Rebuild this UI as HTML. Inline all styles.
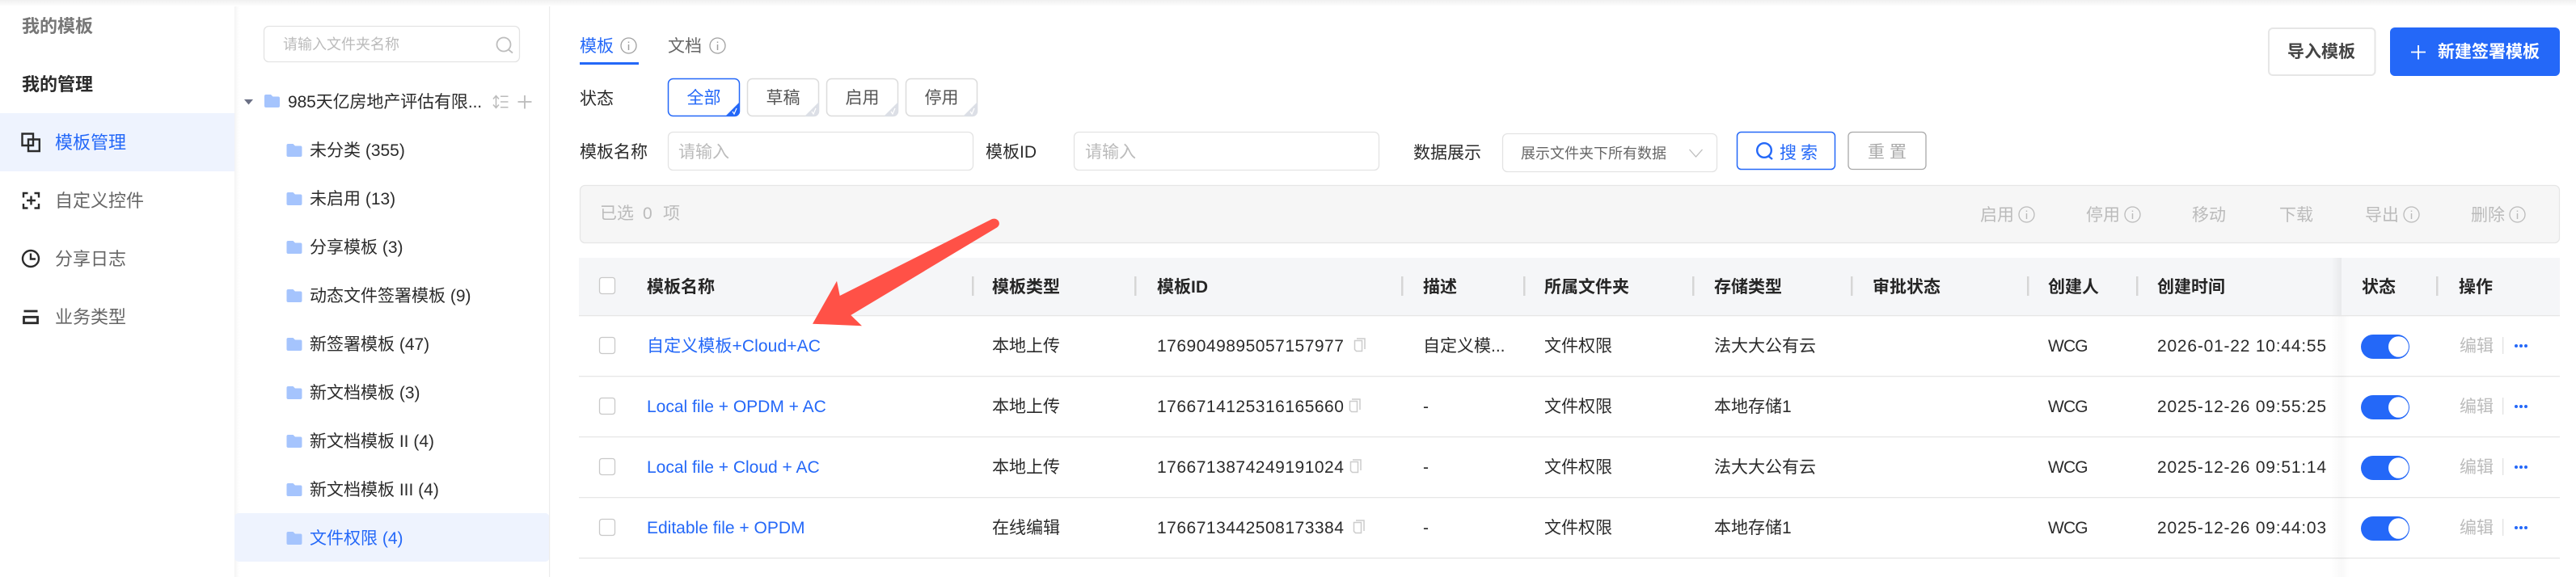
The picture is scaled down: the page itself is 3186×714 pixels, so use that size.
<!DOCTYPE html>
<html lang="zh-CN"><head><meta charset="utf-8"><title>模板管理</title>
<style>
html,body{margin:0;padding:0;background:#fff}
body{position:relative;width:3186px;height:714px;overflow:hidden;font-family:"Liberation Sans","Noto Sans CJK SC",sans-serif;font-size:21px;color:#2b2b2b}
svg{position:absolute;left:0;top:0}
.t{position:absolute;line-height:30px;white-space:nowrap;margin-top:2px}
.r{margin-top:1px}
.n{font-size:22px;color:#666;margin-top:1px}
.h{font-weight:700;color:#262626}
.l{color:#2468f8}
.g{color:#bbb}
.d{letter-spacing:.78px}
.i{letter-spacing:.5px}
.w{letter-spacing:-.85px}
.c{text-align:center}
</style></head><body>
<svg width="3186" height="714" viewBox="0 0 3186 714" fill="none">
<defs>
<linearGradient id="top" x1="0" y1="0" x2="0" y2="1"><stop offset="0" stop-color="#f0f0f0"/><stop offset="1" stop-color="#fff"/></linearGradient>
<linearGradient id="lft" x1="0" y1="0" x2="1" y2="0"><stop offset="0" stop-color="#f3f3f3"/><stop offset="1" stop-color="#fff" stop-opacity="0"/></linearGradient>
<linearGradient id="fix" x1="0" y1="0" x2="1" y2="0"><stop offset="0" stop-color="#000" stop-opacity="0"/><stop offset="1" stop-color="#000" stop-opacity=".05"/></linearGradient>
<linearGradient id="fixb" x1="0" y1="0" x2="1" y2="0"><stop offset="0" stop-color="#000" stop-opacity="0"/><stop offset="1" stop-color="#000" stop-opacity=".025"/></linearGradient>
<linearGradient id="fix2" x1="0" y1="0" x2="1" y2="0"><stop offset="0" stop-color="#000" stop-opacity=".025"/><stop offset="1" stop-color="#000" stop-opacity="0"/></linearGradient>
<symbol id="fd" viewBox="0 0 19 16"><path d="M2 0H8L10.5 2.5H17a2 2 0 0 1 2 2V14a2 2 0 0 1-2 2H2a2 2 0 0 1-2-2V2a2 2 0 0 1 2-2Z" fill="#a5c4fd"/></symbol>
<symbol id="inf" viewBox="0 0 21 21"><circle cx="10.500" cy="10.500" r="9.500" fill="none" stroke="currentColor" stroke-width="1.300"/><path d="M10.500 9v7M10.500 5.500v1.500" stroke="currentColor" stroke-width="1.500" fill="none"/></symbol>
<symbol id="cp" viewBox="0 0 15 18"><path d="M4 1H14V14" stroke="#ccc" stroke-width="1.500" fill="none"/><path d="M1.500 3.500H10.500V16.500H3.500L1.500 14.500Z" stroke="#ccc" stroke-width="1.500" fill="#fff"/></symbol>
<symbol id="tg" viewBox="0 0 60 30"><rect width="60" height="30" rx="15" fill="#2468f8"/><ellipse cx="46.500" cy="15" rx="12.500" ry="12.800" fill="#fff"/></symbol>
<symbol id="dt" viewBox="0 0 16 4"><circle cx="2" cy="2" r="2" fill="#2468f8"/><circle cx="8" cy="2" r="2" fill="#2468f8"/><circle cx="14" cy="2" r="2" fill="#2468f8"/></symbol>
</defs>
<!-- sidebar -->
<rect x="0" y="140" width="290" height="72" fill="#eef3fe"/>
<g stroke="#2b2b2b" stroke-width="2.400">
<path d="M27.500 165.500H41V180H27.500ZM35 172.500H48.800V187H35Z"/>
<path d="M34.500 239H29V244.500M42.500 239H48V244.500M29 252V257.500H34.500M48 252V257.500H42.500M38.500 242.500V253.500M33 248H44"/>
<circle cx="38" cy="320" r="10"/><path d="M38 313.500V320.500H44"/>
<path d="M29.500 385H46.500M29.500 392.300H46.500V399.700H29.500Z" stroke-width="2.800"/>
</g>
<!-- tree panel -->
<rect x="290" y="0" width="8" height="714" fill="url(#lft)"/>
<rect x="290" y="635" width="389.500" height="60" rx="5" fill="#eef3fe"/>
<rect x="679" y="0" width="1.200" height="714" fill="#ececec"/>
<rect x="326.500" y="32.500" width="316" height="44" rx="6" stroke="#e3e3e3" stroke-width="1.300" fill="#fff"/>
<circle cx="623" cy="55" r="8.500" stroke="#bdbdbd" stroke-width="1.800"/><path d="M629 61.500L634 65.500" stroke="#bdbdbd" stroke-width="1.800"/>
<path d="M302 123H313L307.500 129.500Z" fill="#6b7085"/>
<use href="#fd" x="327" y="117" width="19" height="16"/>
<g stroke="#bbb" stroke-width="1.500">
<path d="M613.500 119V133M610 122.500L613.500 118.500L617 122.500M610 129.500L613.500 133.500L617 129.500M619 119.300H628.500M619 126H628.500M619 132.700H628.500"/>
<path d="M649 118V134.500M640.500 126H657.500" stroke-width="1.800"/>
</g>
<use href="#fd" x="354.500" y="178" width="19" height="16"/>
<use href="#fd" x="354.500" y="238" width="19" height="16"/>
<use href="#fd" x="354.500" y="298" width="19" height="16"/>
<use href="#fd" x="354.500" y="358" width="19" height="16"/>
<use href="#fd" x="354.500" y="418" width="19" height="16"/>
<use href="#fd" x="354.500" y="478" width="19" height="16"/>
<use href="#fd" x="354.500" y="538" width="19" height="16"/>
<use href="#fd" x="354.500" y="598" width="19" height="16"/>
<use href="#fd" x="354.500" y="658" width="19" height="16"/>
<!-- tabs -->
<rect x="717" y="77" width="73" height="3" fill="#2468f8"/>
<use href="#inf" x="767" y="46" width="21" height="21" color="#a0a0a0"/>
<use href="#inf" x="877" y="46" width="21" height="21" color="#a0a0a0"/>
<!-- chips -->
<rect x="826.500" y="97.500" width="88" height="46" rx="6" stroke="#2468f8" stroke-width="1.500" fill="#fff"/>
<rect x="924.500" y="97.500" width="88" height="46" rx="6" stroke="#dcdcdc" stroke-width="1.500" fill="#fff"/>
<rect x="1022.500" y="97.500" width="88" height="46" rx="6" stroke="#dcdcdc" stroke-width="1.500" fill="#fff"/>
<rect x="1120.500" y="97.500" width="88" height="46" rx="6" stroke="#dcdcdc" stroke-width="1.500" fill="#fff"/>
<path d="M915 126V138a6 6 0 0 1-6 6H897Z" fill="#2468f8"/>
<path d="M1013 126V138a6 6 0 0 1-6 6H995Z" fill="#dcdfe6"/>
<path d="M1111 126V138a6 6 0 0 1-6 6H1093Z" fill="#dcdfe6"/>
<path d="M1209 126V138a6 6 0 0 1-6 6H1191Z" fill="#dcdfe6"/>
<g stroke="#fff" stroke-width="1.200"><path d="M906 138L908 141L911 134"/><path d="M1004 138L1006 141L1009 134"/><path d="M1102 138L1104 141L1107 134"/><path d="M1200 138L1202 141L1205 134"/></g>
<!-- filters -->
<rect x="826.500" y="163.500" width="377" height="47" rx="6" stroke="#e3e3e3" stroke-width="1.300" fill="#fff"/>
<rect x="1328.500" y="163.500" width="377" height="47" rx="6" stroke="#e3e3e3" stroke-width="1.300" fill="#fff"/>
<rect x="1858.500" y="165.500" width="265" height="47" rx="6" stroke="#e3e3e3" stroke-width="1.300" fill="#fff"/>
<path d="M2089.500 185L2097.500 194L2105.500 185" stroke="#bdbdbd" stroke-width="1.300"/>
<rect x="2148.500" y="163.500" width="121" height="46" rx="5" stroke="#2468f8" stroke-width="1.500" fill="#fff"/>
<circle cx="2182" cy="186" r="8.800" stroke="#2468f8" stroke-width="2.400"/><path d="M2187 193L2192 197" stroke="#2468f8" stroke-width="2.400"/>
<rect x="2286" y="163.500" width="96" height="46" rx="5" stroke="#a8a8a8" stroke-width="1.300" fill="#fff"/>
<rect x="2806" y="35" width="131.500" height="58" rx="5" stroke="#e6e6e6" stroke-width="2" fill="#fff"/>
<rect x="2956" y="34" width="210" height="60" rx="6" fill="#2468f8"/>
<path d="M2991 56V73.500M2982 64.500H3000" stroke="#fff" stroke-width="1.800"/>
<!-- selection bar -->
<rect x="717.500" y="229.500" width="2448" height="71" rx="6" fill="#f6f6f6" stroke="#e6e6e6" stroke-width="1.300"/>
<use href="#inf" x="2496" y="255" width="21" height="21" color="#bbb"/>
<use href="#inf" x="2627" y="255" width="21" height="21" color="#bbb"/>
<use href="#inf" x="2972" y="255" width="21" height="21" color="#bbb"/>
<use href="#inf" x="3103" y="255" width="21" height="21" color="#bbb"/>
<!-- table -->
<rect x="716" y="319" width="2450" height="71" fill="#f5f6f8"/>
<g fill="#e6e6e6">
<rect x="716" y="390" width="2450" height="1.300"/>
<rect x="716" y="465" width="2450" height="1.300"/>
<rect x="716" y="540" width="2450" height="1.300"/>
<rect x="716" y="615" width="2450" height="1.300"/>
<rect x="716" y="690" width="2450" height="1.300"/>
</g>
<g fill="#d6d6d6">
<rect x="1202" y="342" width="2.500" height="24"/><rect x="1403" y="342" width="2.500" height="24"/><rect x="1733" y="342" width="2.500" height="24"/><rect x="1884" y="342" width="2.500" height="24"/><rect x="2093" y="342" width="2.500" height="24"/><rect x="2289" y="342" width="2.500" height="24"/><rect x="2507" y="342" width="2.500" height="24"/><rect x="2642" y="342" width="2.500" height="24"/><rect x="3013" y="342" width="2.500" height="24"/>
</g>
<g fill="#fff" stroke="#c9c9c9" stroke-width="1.300">
<rect x="741.500" y="343.500" width="19" height="20" rx="3"/>
<rect x="741.500" y="417.500" width="19" height="20" rx="3"/>
<rect x="741.500" y="492.500" width="19" height="20" rx="3"/>
<rect x="741.500" y="567.500" width="19" height="20" rx="3"/>
<rect x="741.500" y="642.500" width="19" height="20" rx="3"/>
</g>
<use href="#cp" x="1674" y="418" width="15" height="18"/>
<use href="#cp" x="1668" y="493" width="15" height="18"/>
<use href="#cp" x="1669" y="568" width="15" height="18"/>
<use href="#cp" x="1673" y="643" width="15" height="18"/>
<!-- fixed column -->
<rect x="2883" y="319" width="13" height="71" fill="url(#fix)"/>
<rect x="2883" y="391" width="13" height="323" fill="url(#fixb)"/>
<rect x="2896" y="391" width="10" height="323" fill="url(#fix2)"/>
<use href="#tg" x="2920" y="414" width="60" height="30"/>
<use href="#tg" x="2920" y="489" width="60" height="30"/>
<use href="#tg" x="2920" y="564" width="60" height="30"/>
<use href="#tg" x="2920" y="639" width="60" height="30"/>
<g fill="#e2e2e2"><rect x="3095" y="417" width="1.300" height="21"/><rect x="3095" y="492" width="1.300" height="21"/><rect x="3095" y="567" width="1.300" height="21"/><rect x="3095" y="642" width="1.300" height="21"/></g>
<use href="#dt" x="3110" y="426" width="16" height="4"/>
<use href="#dt" x="3110" y="501" width="16" height="4"/>
<use href="#dt" x="3110" y="576" width="16" height="4"/>
<use href="#dt" x="3110" y="651" width="16" height="4"/>
<!-- top shade -->
<rect x="0" y="0" width="3186" height="8" fill="url(#top)"/>
</svg>

<!-- sidebar text -->
<div class="t n" style="left:27px;top:17px;font-weight:700;color:#777">我的模板</div>
<div class="t n" style="left:27px;top:89px;font-weight:700;color:#2b2b2b">我的管理</div>
<div class="t n" style="left:68px;top:161px;color:#2468f8">模板管理</div>
<div class="t n" style="left:68px;top:233px">自定义控件</div>
<div class="t n" style="left:68px;top:305px">分享日志</div>
<div class="t n" style="left:68px;top:377px">业务类型</div>
<!-- tree text -->
<div class="t r" style="left:350px;top:39px;font-size:18px;color:#bbb">请输入文件夹名称</div>
<div class="t r" style="left:356px;top:111px;letter-spacing:-.1px">985天亿房地产评估有限...</div>
<div class="t r" style="left:383px;top:171px">未分类 (355)</div>
<div class="t r" style="left:383px;top:231px">未启用 (13)</div>
<div class="t r" style="left:383px;top:291px">分享模板 (3)</div>
<div class="t r" style="left:383px;top:351px">动态文件签署模板 (9)</div>
<div class="t r" style="left:383px;top:411px">新签署模板 (47)</div>
<div class="t r" style="left:383px;top:471px">新文档模板 (3)</div>
<div class="t r" style="left:383px;top:531px">新文档模板 II (4)</div>
<div class="t r" style="left:383px;top:591px">新文档模板 III (4)</div>
<div class="t r l" style="left:383px;top:651px">文件权限 (4)</div>
<!-- tabs & filters -->
<div class="t l" style="left:717px;top:41px">模板</div>
<div class="t" style="left:826px;top:41px;color:#666">文档</div>
<div class="t" style="left:717px;top:106px">状态</div>
<div class="t c l" style="left:826px;width:89px;top:105px">全部</div>
<div class="t c" style="left:924px;width:89px;top:105px;color:#555">草稿</div>
<div class="t c" style="left:1022px;width:89px;top:105px;color:#555">启用</div>
<div class="t c" style="left:1120px;width:89px;top:105px;color:#555">停用</div>
<div class="t" style="left:717px;top:172px">模板名称</div>
<div class="t g" style="left:839px;top:172px">请输入</div>
<div class="t" style="left:1219px;top:172px">模板ID</div>
<div class="t g" style="left:1342px;top:172px">请输入</div>
<div class="t" style="left:1748px;top:173px">数据展示</div>
<div class="t" style="left:1881px;top:173px;font-size:18px;color:#666">展示文件夹下所有数据</div>
<div class="t l" style="left:2201px;top:173px">搜</div>
<div class="t l" style="left:2227px;top:173px">索</div>
<div class="t" style="left:2310px;top:172px;color:#aaa">重</div>
<div class="t" style="left:2337px;top:172px;color:#aaa">置</div>
<div class="t" style="left:2829px;top:48px;font-weight:700;color:#444">导入模板</div>
<div class="t" style="left:3015px;top:48px;font-weight:700;color:#fff">新建签署模板</div>
<!-- selection bar text -->
<div class="t g" style="left:742px;top:248px">已选</div>
<div class="t g" style="left:795px;top:248px">0</div>
<div class="t g" style="left:820px;top:248px">项</div>
<div class="t g" style="left:2449px;top:250px">启用</div>
<div class="t g" style="left:2580px;top:250px">停用</div>
<div class="t g" style="left:2711px;top:250px">移动</div>
<div class="t g" style="left:2819px;top:250px">下载</div>
<div class="t g" style="left:2925px;top:250px">导出</div>
<div class="t g" style="left:3056px;top:250px">删除</div>
<!-- header -->
<div class="t h" style="left:800px;top:339px">模板名称</div>
<div class="t h" style="left:1227px;top:339px">模板类型</div>
<div class="t h" style="left:1431px;top:339px">模板ID</div>
<div class="t h" style="left:1760px;top:339px">描述</div>
<div class="t h" style="left:1910px;top:339px">所属文件夹</div>
<div class="t h" style="left:2120px;top:339px">存储类型</div>
<div class="t h" style="left:2316px;top:339px">审批状态</div>
<div class="t h" style="left:2533px;top:339px">创建人</div>
<div class="t h" style="left:2668px;top:339px">创建时间</div>
<div class="t h" style="left:2921px;top:339px">状态</div>
<div class="t h" style="left:3041px;top:339px">操作</div>
<!-- row 1 -->
<div class="t l" style="left:800px;top:412px;letter-spacing:.1px">自定义模板+Cloud+AC</div>
<div class="t" style="left:1227px;top:412px">本地上传</div>
<div class="t i" style="left:1431px;top:412px">1769049895057157977</div>
<div class="t" style="left:1760px;top:412px">自定义模...</div>
<div class="t" style="left:1910px;top:412px">文件权限</div>
<div class="t" style="left:2120px;top:412px">法大大公有云</div>
<div class="t w" style="left:2533px;top:412px">WCG</div>
<div class="t d" style="left:2668px;top:412px">2026-01-22 10:44:55</div>
<div class="t g" style="left:3042px;top:412px">编辑</div>
<!-- row 2 -->
<div class="t l" style="left:800px;top:487px">Local file + OPDM + AC</div>
<div class="t" style="left:1227px;top:487px">本地上传</div>
<div class="t i" style="left:1431px;top:487px">1766714125316165660</div>
<div class="t" style="left:1760px;top:487px">-</div>
<div class="t" style="left:1910px;top:487px">文件权限</div>
<div class="t" style="left:2120px;top:487px">本地存储1</div>
<div class="t w" style="left:2533px;top:487px">WCG</div>
<div class="t d" style="left:2668px;top:487px">2025-12-26 09:55:25</div>
<div class="t g" style="left:3042px;top:487px">编辑</div>
<!-- row 3 -->
<div class="t l" style="left:800px;top:562px">Local file + Cloud + AC</div>
<div class="t" style="left:1227px;top:562px">本地上传</div>
<div class="t i" style="left:1431px;top:562px">1766713874249191024</div>
<div class="t" style="left:1760px;top:562px">-</div>
<div class="t" style="left:1910px;top:562px">文件权限</div>
<div class="t" style="left:2120px;top:562px">法大大公有云</div>
<div class="t w" style="left:2533px;top:562px">WCG</div>
<div class="t d" style="left:2668px;top:562px">2025-12-26 09:51:14</div>
<div class="t g" style="left:3042px;top:562px">编辑</div>
<!-- row 4 -->
<div class="t l" style="left:800px;top:637px">Editable file + OPDM</div>
<div class="t" style="left:1227px;top:637px">在线编辑</div>
<div class="t i" style="left:1431px;top:637px">1766713442508173384</div>
<div class="t" style="left:1760px;top:637px">-</div>
<div class="t" style="left:1910px;top:637px">文件权限</div>
<div class="t" style="left:2120px;top:637px">本地存储1</div>
<div class="t w" style="left:2533px;top:637px">WCG</div>
<div class="t d" style="left:2668px;top:637px">2025-12-26 09:44:03</div>
<div class="t g" style="left:3042px;top:637px">编辑</div>
<!-- arrow -->
<svg width="3186" height="714" viewBox="0 0 3186 714"><path d="M1005 400.700L1035 347.700L1038.700 366L1227 271Q1232 269.500 1235 273.500Q1237.500 278 1233 281.500L1052.300 390L1066 403.300Z" fill="#ff5147"/></svg>
</body></html>
